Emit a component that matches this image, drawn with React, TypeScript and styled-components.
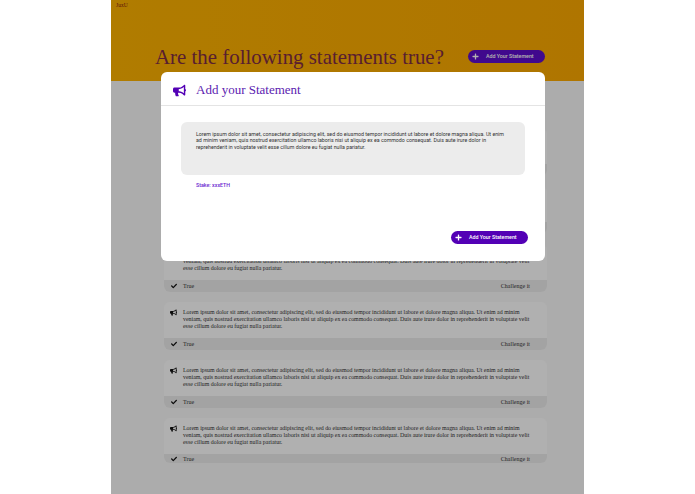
import React from "react";
import styled, { createGlobalStyle } from "styled-components";
import { FaBullhorn, FaCheck, FaPlus } from "react-icons/fa";

const LOREM =
    "Lorem ipsum dolor sit amet, consectetur adipiscing elit, sed do eiusmod tempor incididunt ut labore et dolore magna aliqua. Ut enim ad minim veniam, quis nostrud exercitation ullamco laboris nisi ut aliquip ex ea commodo consequat. Duis aute irure dolor in reprehenderit in voluptate velit esse cillum dolore eu fugiat nulla pariatur.";

const GlobalStyle = createGlobalStyle`
    html, body {
        margin: 0;
        padding: 0;
        background: #FFFFFF;
    }
`;

const Page = styled.div`
    position: relative;
    width: 473px;
    height: 494px;
    margin-left: 111px;
    overflow: hidden;
    background: #F7F7F7;
    font-family: "Liberation Serif", serif;
`;

const Header = styled.header`
    height: 81px;
    box-sizing: border-box;
    padding: 2px 39px 0 5px;
    background: linear-gradient(90deg, #FCB200, #FBA800);
    display: flex;
    flex-direction: column;
`;

const Brand = styled.span`
    font-size: 5.5px;
    line-height: 6px;
    color: #8A1A10;
`;

const HeaderRow = styled.div`
    margin-top: 36px;
    padding-left: 39px;
    display: flex;
    justify-content: space-between;
    align-items: center;
`;

const Title = styled.h1`
    margin: 0;
    font-size: 20.9px;
    line-height: 26px;
    font-weight: 400;
    color: #7F2C45;
    white-space: nowrap;
`;

const PillButton = styled.button`
    width: 77px;
    height: 13px;
    margin-bottom: ${props => props.lift || "0"};
    padding: 0 0 0 4px;
    border: none;
    border-radius: 7px;
    background: ${props => props.color || "#5C0DCA"};
    color: #FFFFFF;
    font-family: Roboto, sans-serif;
    font-size: 5.3px;
    font-weight: 500;
    display: flex;
    align-items: center;
    gap: 7px;
`;

const List = styled.main`
    padding: 47px 37px 0 53px;
    display: flex;
    flex-direction: column;
    gap: 10px;
`;

const CardFooter = styled.div`
    height: 12px;
    padding: 0 17px 0 7px;
    background: #EAEAEA;
    display: flex;
    align-items: center;
    justify-content: space-between;
    font-size: 6px;
    color: #333333;
`;

const Card = styled.article`
    width: 383px;
    border-radius: 6px;
    overflow: hidden;
    background: #FCFCFC;

    &:last-child ${CardFooter} {
        height: 9px;
    }
`;

const CardBody = styled.div`
    height: 36px;
    box-sizing: border-box;
    padding: 7px 14px 0 6px;
    display: flex;
    gap: 6px;
    color: #111111;
`;

const CardText = styled.p`
    margin: 0;
    font-size: 5.9px;
    line-height: 7.2px;
    color: #333333;
`;

const TrueLabel = styled.span`
    display: flex;
    align-items: center;
    gap: 6px;
`;

const Backdrop = styled.div`
    position: absolute;
    inset: 0;
    background: rgba(0, 0, 0, 0.3);
`;

const Modal = styled.section`
    position: absolute;
    left: 50px;
    top: 72px;
    width: 384px;
    height: 189px;
    border-radius: 6px;
    background: #FFFFFF;
    display: flex;
    flex-direction: column;
`;

const ModalHeader = styled.div`
    height: 34px;
    flex-shrink: 0;
    padding: 3px 0 0 12px;
    box-sizing: border-box;
    border-bottom: 1px solid #E4E4E4;
    display: flex;
    align-items: center;
    gap: 10px;
    color: #5300B5;
`;

const ModalTitle = styled.h2`
    margin: 0;
    font-size: 13px;
    font-weight: 400;
    color: #5B22B0;
`;

const ModalBody = styled.div`
    flex: 1;
    padding: 16px 17px 17.5px 20px;
    display: flex;
    flex-direction: column;
`;

const TextBox = styled.div`
    width: 344px;
    height: 53px;
    box-sizing: border-box;
    padding: 9px 14px 0 15px;
    border-radius: 6px;
    background: #ECECEC;
    font-family: Roboto, sans-serif;
    font-size: 5.27px;
    line-height: 6.3px;
    color: #333333;
`;

const Stake = styled.span`
    margin: 7px 0 0 15px;
    font-family: Roboto, sans-serif;
    font-size: 5.3px;
    line-height: 6px;
    font-weight: 500;
    color: #6A1FD0;
`;

const ModalActions = styled.div`
    margin-top: auto;
    display: flex;
    justify-content: flex-end;
`;

const statements = [1, 2, 3, 4, 5, 6];

const App = () => {
    return (
        <>
            <GlobalStyle />
            <Page>
                <Header>
                    <Brand>JuxU</Brand>
                    <HeaderRow>
                        <Title>Are the following statements true?</Title>
                        <PillButton lift="2px">
                            <FaPlus size={7} />
                            Add Your Statement
                        </PillButton>
                    </HeaderRow>
                </Header>

                <List>
                    {statements.map(id => (
                        <Card key={id}>
                            <CardBody>
                                <FaBullhorn size={7} style={{ flexShrink: 0 }} />
                                <CardText>{LOREM}</CardText>
                            </CardBody>
                            <CardFooter>
                                <TrueLabel>
                                    <FaCheck size={6} color="#111111" />
                                    True
                                </TrueLabel>
                                <span>Challenge it</span>
                            </CardFooter>
                        </Card>
                    ))}
                </List>

                <Backdrop />

                <Modal>
                    <ModalHeader>
                        <FaBullhorn size={13} />
                        <ModalTitle>Add your Statement</ModalTitle>
                    </ModalHeader>
                    <ModalBody>
                        <TextBox>{LOREM}</TextBox>
                        <Stake>Stake: xxxETH</Stake>
                        <ModalActions>
                            <PillButton color="#5300B5">
                                <FaPlus size={7} />
                                Add Your Statement
                            </PillButton>
                        </ModalActions>
                    </ModalBody>
                </Modal>
            </Page>
        </>
    );
};

export default App;
